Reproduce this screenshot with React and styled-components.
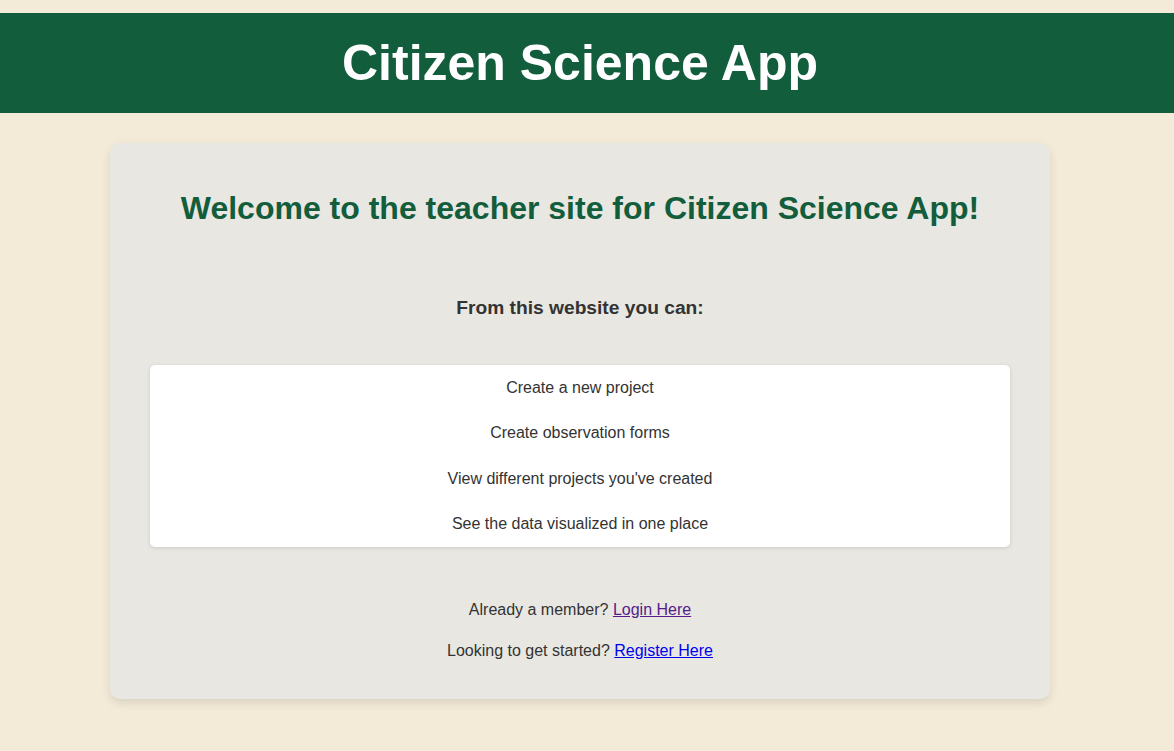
import React from "react";
import styled, { createGlobalStyle } from "styled-components";

const GlobalStyle = createGlobalStyle`
  body {
    margin: 0;
    background: #f3ead8;
    font-family: "Liberation Sans", Arial, sans-serif;
    color: #333;
  }
`;

const features = [
  "Create a new project",
  "Create observation forms",
  "View different projects you've created",
  "See the data visualized in one place",
];

const App = () => {
  return (
    <>
      <GlobalStyle />
      <Page>
        <Header>
          <Title>Citizen Science App</Title>
        </Header>
        <Content>
          <Card>
            <Welcome>Welcome to the teacher site for Citizen Science App!</Welcome>
            <Subtitle>From this website you can:</Subtitle>
            <FeatureList>
              {features.map((f) => (
                <Feature key={f}>{f}</Feature>
              ))}
            </FeatureList>
            <Links>
              <Line>
                Already a member? <Link href="#login" visited>Login Here</Link>
              </Line>
              <Line>
                Looking to get started? <Link href="#register">Register Here</Link>
              </Line>
            </Links>
          </Card>
        </Content>
      </Page>
    </>
  );
};

const Page = styled.div`
  padding-top: 13px;
  padding-bottom: 40px;
`;

const Header = styled.header`
  background: #125d3c;
  height: 100px;
  box-sizing: border-box;
  padding-right: 14px;
  display: flex;
  align-items: center;
  justify-content: center;
`;

const Title = styled.h1`
  margin: 0;
  color: #fff;
  font-size: 50px;
  font-weight: 700;
`;

const Content = styled.div`
  padding-right: 14px;
`;

const Card = styled.main`
  width: 940px;
  box-sizing: border-box;
  margin: 30px auto 0;
  padding: 40px 40px 38px;
  background: #e9e7e2;
  border-radius: 10px;
  box-shadow: 0 4px 10px rgba(0, 0, 0, 0.1);
  display: flex;
  flex-direction: column;
  align-items: stretch;
  text-align: center;
`;

const Welcome = styled.h2`
  margin: 7px 0 0;
  color: #125d3c;
  font-size: 32px;
  line-height: 37px;
  font-weight: 700;
`;

const Subtitle = styled.h3`
  margin: 69px 0 0;
  color: #333;
  font-size: 19.2px;
  line-height: 23px;
  font-weight: 700;
`;

const FeatureList = styled.ul`
  list-style: none;
  margin: 46px 0 0;
  padding: 0;
  background: #fff;
  border-radius: 5px;
  box-shadow: 0 1px 4px rgba(0, 0, 0, 0.12);
`;

const Feature = styled.li`
  padding: 13.5px 0;
  font-size: 16px;
  line-height: 18.5px;
  color: #333;
`;

const Links = styled.div`
  margin-top: 54px;
  display: flex;
  flex-direction: column;
  gap: 23px;
`;

const Line = styled.p`
  margin: 0;
  font-size: 16px;
  line-height: 18.4px;
  color: #333;
`;

const Link = styled.a`
  color: ${(p) => (p.visited ? "#551a8b" : "#0000ee")};
  text-decoration: underline;
`;

export default App;
